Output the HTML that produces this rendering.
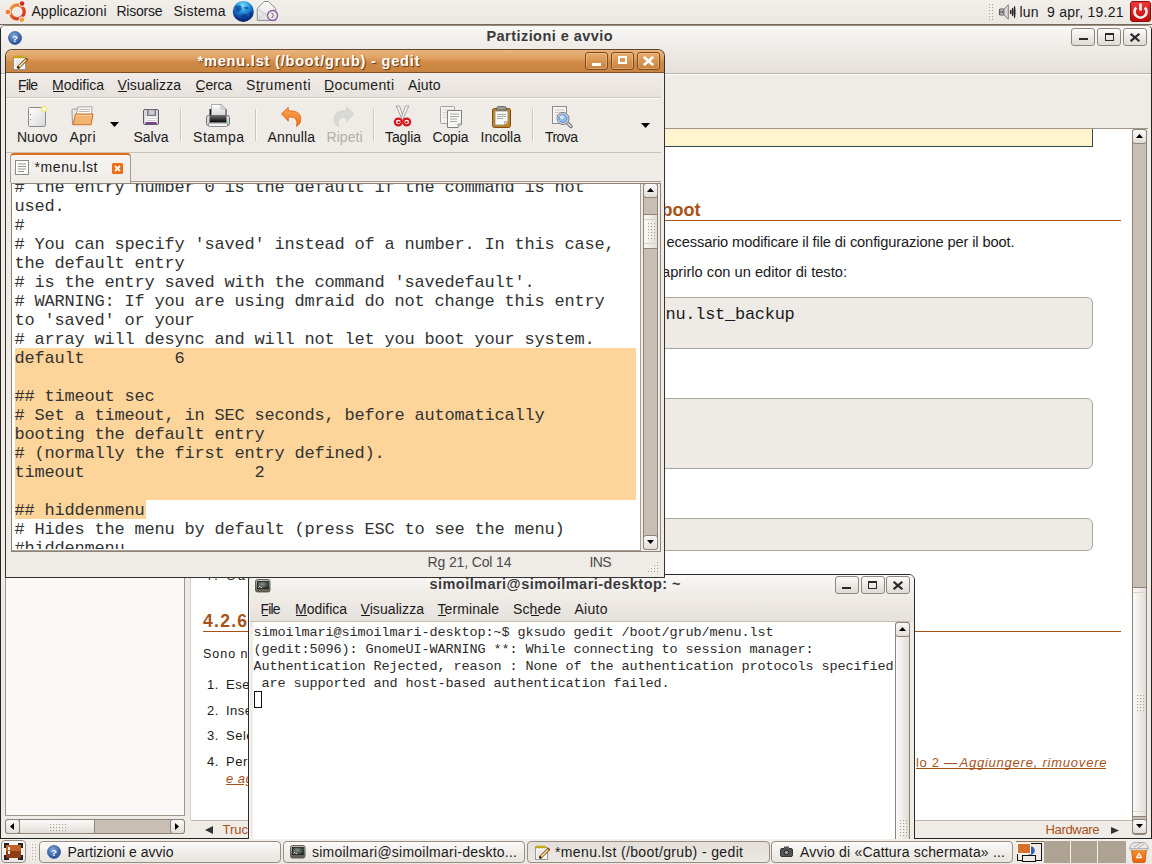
<!DOCTYPE html><html><head><meta charset="utf-8"><style>
html,body{margin:0;padding:0;}
body{width:1152px;height:864px;position:relative;overflow:hidden;background:#efebe7;font-family:'Liberation Sans',sans-serif;}
body div{position:absolute;box-sizing:border-box;}
svg{position:absolute;}
</style></head><body>
<div style="left:0px;top:25px;width:1152px;height:814px;background:#efebe7;border:1px solid #232323;border-top-color:#9a8e81;border-top-left-radius:5px;border-top-right-radius:5px;"></div>
<div style="left:1px;top:26px;width:1150px;height:47px;background:linear-gradient(#f9f8f6,#efebe7 45%,#e5e0db);border-top-left-radius:4px;border-top-right-radius:4px;"></div>
<div style="left:1px;top:73px;width:1150px;height:1px;background:#bdb2a7;"></div>
<div style="left:1px;top:74px;width:1150px;height:1px;background:#ffffff;"></div>
<div style="left:486.50px;top:29.00px;font-family:'Liberation Sans';font-size:14.5px;font-weight:700;font-style:normal;color:#3a3a3a;letter-spacing:0.443px;line-height:1;white-space:pre;">Partizioni e avvio</div>
<svg style="left:8px;top:31px;" width="14" height="14" viewBox="0 0 14 14"><defs><radialGradient id="hg" cx="40%" cy="30%" r="70%"><stop offset="0" stop-color="#7ea6df"/><stop offset="1" stop-color="#234f9b"/></radialGradient></defs><circle cx="7" cy="7" r="6.5" fill="url(#hg)" stroke="#1f3f7a" stroke-width="0.6"/><text x="7" y="10.6" font-family="Liberation Sans" font-weight="700" font-size="9.5" fill="#fff" text-anchor="middle">?</text></svg>
<div style="left:1071px;top:28px;width:24px;height:18px;border:1px solid #8f877e;border-radius:3px;background:linear-gradient(#fdfcfb,#ebe7e3 55%,#e0dbd5);"></div>
<div style="left:1097px;top:28px;width:24px;height:18px;border:1px solid #8f877e;border-radius:3px;background:linear-gradient(#fdfcfb,#ebe7e3 55%,#e0dbd5);"></div>
<div style="left:1123px;top:28px;width:24px;height:18px;border:1px solid #8f877e;border-radius:3px;background:linear-gradient(#fdfcfb,#ebe7e3 55%,#e0dbd5);"></div>
<div style="left:1079px;top:38px;width:9px;height:2px;background:#2a2a2a;"></div>
<div style="left:1105px;top:33px;width:9px;height:8px;border:1px solid #2a2a2a;border-top-width:2px;"></div>
<svg style="left:1130px;top:33px;" width="10" height="9" viewBox="0 0 10 9"><path d="M1.5 1.5 L8.5 7.5 M8.5 1.5 L1.5 7.5" stroke="#2a2a2a" stroke-width="2.2" stroke-linecap="square"/></svg>
<div style="left:5px;top:128px;width:180px;height:688px;background:#faf9f7;border:1px solid #a0958a;"></div>
<div style="left:5px;top:819px;width:180px;height:15px;background:#c9beb3;border:1px solid #8e8378;border-radius:3px;"></div>
<div style="left:5px;top:819px;width:15px;height:15px;border:1px solid #8e8378;border-radius:3px;background:linear-gradient(#fbfaf9,#ece8e4 60%,#e2ddd7);"></div>
<svg style="left:10px;top:823px;" width="4" height="7" viewBox="0 0 4 7"><polygon points="4,0 4,7 0,3.5" fill="#000"/></svg>
<div style="left:19px;top:819px;width:76px;height:15px;border:1px solid #8e8378;background:linear-gradient(#fbfaf9,#ece8e4 60%,#e2ddd7);"></div>
<svg style="left:49px;top:823px;" width="19" height="10" viewBox="0 0 19 10"><rect x="1" y="1" width="1" height="1" fill="#a99e92"/><rect x="0" y="0" width="1" height="1" fill="#ffffff"/><rect x="1" y="4" width="1" height="1" fill="#a99e92"/><rect x="0" y="3" width="1" height="1" fill="#ffffff"/><rect x="1" y="7" width="1" height="1" fill="#a99e92"/><rect x="0" y="6" width="1" height="1" fill="#ffffff"/><rect x="4" y="1" width="1" height="1" fill="#a99e92"/><rect x="3" y="0" width="1" height="1" fill="#ffffff"/><rect x="4" y="4" width="1" height="1" fill="#a99e92"/><rect x="3" y="3" width="1" height="1" fill="#ffffff"/><rect x="4" y="7" width="1" height="1" fill="#a99e92"/><rect x="3" y="6" width="1" height="1" fill="#ffffff"/><rect x="7" y="1" width="1" height="1" fill="#a99e92"/><rect x="6" y="0" width="1" height="1" fill="#ffffff"/><rect x="7" y="4" width="1" height="1" fill="#a99e92"/><rect x="6" y="3" width="1" height="1" fill="#ffffff"/><rect x="7" y="7" width="1" height="1" fill="#a99e92"/><rect x="6" y="6" width="1" height="1" fill="#ffffff"/><rect x="10" y="1" width="1" height="1" fill="#a99e92"/><rect x="9" y="0" width="1" height="1" fill="#ffffff"/><rect x="10" y="4" width="1" height="1" fill="#a99e92"/><rect x="9" y="3" width="1" height="1" fill="#ffffff"/><rect x="10" y="7" width="1" height="1" fill="#a99e92"/><rect x="9" y="6" width="1" height="1" fill="#ffffff"/><rect x="13" y="1" width="1" height="1" fill="#a99e92"/><rect x="12" y="0" width="1" height="1" fill="#ffffff"/><rect x="13" y="4" width="1" height="1" fill="#a99e92"/><rect x="12" y="3" width="1" height="1" fill="#ffffff"/><rect x="13" y="7" width="1" height="1" fill="#a99e92"/><rect x="12" y="6" width="1" height="1" fill="#ffffff"/><rect x="16" y="1" width="1" height="1" fill="#a99e92"/><rect x="15" y="0" width="1" height="1" fill="#ffffff"/><rect x="16" y="4" width="1" height="1" fill="#a99e92"/><rect x="15" y="3" width="1" height="1" fill="#ffffff"/><rect x="16" y="7" width="1" height="1" fill="#a99e92"/><rect x="15" y="6" width="1" height="1" fill="#ffffff"/></svg>
<div style="left:170px;top:819px;width:15px;height:15px;border:1px solid #8e8378;border-radius:3px;background:linear-gradient(#fbfaf9,#ece8e4 60%,#e2ddd7);"></div>
<svg style="left:175px;top:823px;" width="4" height="7" viewBox="0 0 4 7"><polygon points="0,0 0,7 4,3.5" fill="#000"/></svg>
<div style="left:185px;top:128px;width:5px;height:692px;background:#efebe7;"></div>
<div style="left:190px;top:128px;width:942px;height:692px;background:#ffffff;border-left:1px solid #d5cfc8;border-top:1px solid #a0958a;"></div>
<div style="left:190px;top:128px;width:958px;height:1px;background:#a0958a;"></div>
<div style="left:191px;top:129px;width:902px;height:18px;background:#fff4cd;border-right:1px solid #2f4e4c;border-bottom:1px solid #2f4e4c;"></div>
<div style="left:661.52px;top:201.00px;font-family:'Liberation Sans';font-size:18px;font-weight:700;font-style:normal;color:#a8521a;letter-spacing:0.000px;line-height:1;white-space:pre;">boot</div>
<div style="left:203px;top:220px;width:918px;height:1px;background:#a8521a;"></div>
<div style="left:666.50px;top:235.00px;font-family:'Liberation Sans';font-size:14.67px;font-weight:400;font-style:normal;color:#1a1a1a;letter-spacing:-0.124px;line-height:1;white-space:pre;">ecessario modificare il file di configurazione per il boot.</div>
<div style="left:662.06px;top:265.00px;font-family:'Liberation Sans';font-size:14.67px;font-weight:400;font-style:normal;color:#1a1a1a;letter-spacing:0.000px;line-height:1;white-space:pre;">aprirlo con un editor di testo:</div>
<div style="left:203px;top:297px;width:890px;height:52px;background:#eeebe6;border:1px solid #aca69f;border-radius:6px;"></div>
<div style="left:665.50px;top:306.00px;font-family:'Liberation Mono';font-size:17px;font-weight:400;font-style:normal;color:#1a1a1a;letter-spacing:-0.279px;line-height:1;white-space:pre;">nu.lst_backup</div>
<div style="left:203px;top:398px;width:890px;height:71px;background:#eeebe6;border:1px solid #aca69f;border-radius:6px;"></div>
<div style="left:203px;top:518px;width:890px;height:33px;background:#eeebe6;border:1px solid #aca69f;border-radius:6px;"></div>
<div style="left:204.50px;top:570.00px;font-family:'Liberation Sans';font-size:12.5px;font-weight:400;font-style:normal;color:#1a1a1a;letter-spacing:2.806px;line-height:1;white-space:pre;">4. Sal</div>
<div style="left:203.00px;top:613.00px;font-family:'Liberation Sans';font-size:17.5px;font-weight:700;font-style:normal;color:#a8521a;letter-spacing:1.266px;line-height:1;white-space:pre;">4.2.6</div>
<div style="left:203px;top:631px;width:918px;height:1px;background:#a8521a;"></div>
<div style="left:203.00px;top:648.00px;font-family:'Liberation Sans';font-size:12.5px;font-weight:400;font-style:normal;color:#1a1a1a;letter-spacing:0.975px;line-height:1;white-space:pre;">Sono n</div>
<div style="left:207.00px;top:678.00px;font-family:'Liberation Sans';font-size:13px;font-weight:400;font-style:normal;color:#1a1a1a;letter-spacing:0.000px;line-height:1;white-space:pre;letter-spacing:0.6px;">1.</div>
<div style="left:226.00px;top:678.00px;font-family:'Liberation Sans';font-size:13px;font-weight:400;font-style:normal;color:#1a1a1a;letter-spacing:0.000px;line-height:1;white-space:pre;letter-spacing:0.5px;">Eseguire</div>
<div style="left:207.00px;top:703.70px;font-family:'Liberation Sans';font-size:13px;font-weight:400;font-style:normal;color:#1a1a1a;letter-spacing:0.000px;line-height:1;white-space:pre;letter-spacing:0.6px;">2.</div>
<div style="left:226.00px;top:703.70px;font-family:'Liberation Sans';font-size:13px;font-weight:400;font-style:normal;color:#1a1a1a;letter-spacing:0.000px;line-height:1;white-space:pre;letter-spacing:0.5px;">Inserire</div>
<div style="left:207.00px;top:729.40px;font-family:'Liberation Sans';font-size:13px;font-weight:400;font-style:normal;color:#1a1a1a;letter-spacing:0.000px;line-height:1;white-space:pre;letter-spacing:0.6px;">3.</div>
<div style="left:226.00px;top:729.40px;font-family:'Liberation Sans';font-size:13px;font-weight:400;font-style:normal;color:#1a1a1a;letter-spacing:0.000px;line-height:1;white-space:pre;letter-spacing:0.5px;">Selezionare</div>
<div style="left:207.00px;top:755.10px;font-family:'Liberation Sans';font-size:13px;font-weight:400;font-style:normal;color:#1a1a1a;letter-spacing:0.000px;line-height:1;white-space:pre;letter-spacing:0.6px;">4.</div>
<div style="left:226.00px;top:755.10px;font-family:'Liberation Sans';font-size:13px;font-weight:400;font-style:normal;color:#1a1a1a;letter-spacing:0.000px;line-height:1;white-space:pre;letter-spacing:0.5px;">Per</div>
<div style="left:226.00px;top:772.00px;font-family:'Liberation Sans';font-size:13px;font-weight:400;font-style:italic;color:#a8521a;letter-spacing:0.000px;line-height:1;white-space:pre;text-decoration:underline;letter-spacing:0.5px;">e aggiungere</div>
<div style="left:916.00px;top:755.50px;font-family:'Liberation Sans';font-size:13px;font-weight:400;font-style:normal;color:#a8521a;letter-spacing:0.684px;line-height:1;white-space:pre;">lo 2 —</div>
<div style="left:959.50px;top:755.50px;font-family:'Liberation Sans';font-size:13px;font-weight:400;font-style:italic;color:#a8521a;letter-spacing:0.773px;line-height:1;white-space:pre;">Aggiungere, rimuovere</div>
<div style="left:916px;top:768px;width:190px;height:1px;background:#a8521a;"></div>
<div style="left:191px;top:820px;width:941px;height:18px;background:#efebe7;border-top:1px solid #bdb4aa;"></div>
<svg style="left:205px;top:826px;" width="8" height="8" viewBox="0 0 8 8"><polygon points="8,0 8,8 0,4" fill="#333"/></svg>
<div style="left:222.50px;top:823.00px;font-family:'Liberation Sans';font-size:13px;font-weight:400;font-style:normal;color:#a8521a;letter-spacing:0.000px;line-height:1;white-space:pre;">Trucchi</div>
<div style="left:1045.50px;top:823.00px;font-family:'Liberation Sans';font-size:13px;font-weight:400;font-style:normal;color:#a8521a;letter-spacing:-0.337px;line-height:1;white-space:pre;">Hardware</div>
<svg style="left:1111px;top:827px;" width="8" height="7" viewBox="0 0 8 7"><polygon points="0,0 0,7 8,3.5" fill="#333"/></svg>
<div style="left:1132px;top:129px;width:15px;height:706px;background:#c9beb3;border:1px solid #8e8378;border-radius:3px;"></div>
<div style="left:1132px;top:129px;width:15px;height:15px;border:1px solid #8e8378;border-radius:3px;background:linear-gradient(#fbfaf9,#ece8e4 60%,#e2ddd7);"></div>
<svg style="left:1136px;top:134px;" width="7" height="4" viewBox="0 0 7 4"><polygon points="0,4 7,4 3.5,0" fill="#000"/></svg>
<div style="left:1132px;top:587px;width:15px;height:230px;border:1px solid #8e8378;background:linear-gradient(90deg,#fbfaf9,#ece8e4 60%,#e2ddd7);"></div>
<svg style="left:1136px;top:694px;" width="10" height="19" viewBox="0 0 10 19"><rect x="1" y="1" width="1" height="1" fill="#a99e92"/><rect x="0" y="0" width="1" height="1" fill="#ffffff"/><rect x="1" y="4" width="1" height="1" fill="#a99e92"/><rect x="0" y="3" width="1" height="1" fill="#ffffff"/><rect x="1" y="7" width="1" height="1" fill="#a99e92"/><rect x="0" y="6" width="1" height="1" fill="#ffffff"/><rect x="1" y="10" width="1" height="1" fill="#a99e92"/><rect x="0" y="9" width="1" height="1" fill="#ffffff"/><rect x="1" y="13" width="1" height="1" fill="#a99e92"/><rect x="0" y="12" width="1" height="1" fill="#ffffff"/><rect x="1" y="16" width="1" height="1" fill="#a99e92"/><rect x="0" y="15" width="1" height="1" fill="#ffffff"/><rect x="4" y="1" width="1" height="1" fill="#a99e92"/><rect x="3" y="0" width="1" height="1" fill="#ffffff"/><rect x="4" y="4" width="1" height="1" fill="#a99e92"/><rect x="3" y="3" width="1" height="1" fill="#ffffff"/><rect x="4" y="7" width="1" height="1" fill="#a99e92"/><rect x="3" y="6" width="1" height="1" fill="#ffffff"/><rect x="4" y="10" width="1" height="1" fill="#a99e92"/><rect x="3" y="9" width="1" height="1" fill="#ffffff"/><rect x="4" y="13" width="1" height="1" fill="#a99e92"/><rect x="3" y="12" width="1" height="1" fill="#ffffff"/><rect x="4" y="16" width="1" height="1" fill="#a99e92"/><rect x="3" y="15" width="1" height="1" fill="#ffffff"/><rect x="7" y="1" width="1" height="1" fill="#a99e92"/><rect x="6" y="0" width="1" height="1" fill="#ffffff"/><rect x="7" y="4" width="1" height="1" fill="#a99e92"/><rect x="6" y="3" width="1" height="1" fill="#ffffff"/><rect x="7" y="7" width="1" height="1" fill="#a99e92"/><rect x="6" y="6" width="1" height="1" fill="#ffffff"/><rect x="7" y="10" width="1" height="1" fill="#a99e92"/><rect x="6" y="9" width="1" height="1" fill="#ffffff"/><rect x="7" y="13" width="1" height="1" fill="#a99e92"/><rect x="6" y="12" width="1" height="1" fill="#ffffff"/><rect x="7" y="16" width="1" height="1" fill="#a99e92"/><rect x="6" y="15" width="1" height="1" fill="#ffffff"/></svg>
<div style="left:1133px;top:592px;width:13px;height:1px;background:#d9d3cc;"></div>
<div style="left:1133px;top:811px;width:13px;height:1px;background:#d9d3cc;"></div>
<div style="left:1132px;top:819px;width:15px;height:15px;border:1px solid #8e8378;border-radius:3px;background:linear-gradient(#fbfaf9,#ece8e4 60%,#e2ddd7);"></div>
<svg style="left:1136px;top:824px;" width="7" height="4" viewBox="0 0 7 4"><polygon points="0,0 7,0 3.5,4" fill="#000"/></svg>
<div style="left:248px;top:574px;width:667px;height:300px;background:#efebe7;border:1px solid #2a2a2a;border-top-left-radius:6px;border-top-right-radius:6px;"></div>
<div style="left:250px;top:575px;width:664px;height:47px;background:linear-gradient(#f9f8f6,#efebe7 45%,#e6e1dc);border-top-left-radius:5px;border-top-right-radius:5px;"></div>
<div style="left:250px;top:597px;width:660px;height:25px;background:linear-gradient(#efebe7,#e6e1dc);border-bottom:1px solid #c6bdb3;"></div>
<svg style="left:255px;top:579px;" width="16" height="14" viewBox="0 0 16 14"><defs><linearGradient id="tb0" x1="0" y1="0" x2="0" y2="1"><stop offset="0" stop-color="#c9c5bb"/><stop offset="1" stop-color="#5a5648"/></linearGradient><radialGradient id="ts0" cx="45%" cy="40%" r="70%"><stop offset="0" stop-color="#8a948e"/><stop offset="1" stop-color="#1e2420"/></radialGradient></defs><rect x="0.5" y="0.5" width="14.5" height="12.5" rx="2" fill="url(#tb0)" stroke="#55524a" stroke-width="0.9"/><rect x="2.3" y="2.3" width="11" height="7.5" fill="url(#ts0)" stroke="#111" stroke-width="0.6"/><path d="M3.5 8.5 L5 7 M5.5 8.5h1.5" stroke="#e8e8e8" stroke-width="1"/></svg>
<div style="left:429.50px;top:576.50px;font-family:'Liberation Sans';font-size:14.5px;font-weight:700;font-style:normal;color:#3a3a3a;letter-spacing:0.453px;line-height:1;white-space:pre;">simoilmari@simoilmari-desktop: ~</div>
<div style="left:835px;top:576px;width:24px;height:18px;border:1px solid #8f877e;border-radius:3px;background:linear-gradient(#fdfcfb,#ebe7e3 55%,#e0dbd5);"></div>
<div style="left:861px;top:576px;width:24px;height:18px;border:1px solid #8f877e;border-radius:3px;background:linear-gradient(#fdfcfb,#ebe7e3 55%,#e0dbd5);"></div>
<div style="left:886px;top:576px;width:24px;height:18px;border:1px solid #8f877e;border-radius:3px;background:linear-gradient(#fdfcfb,#ebe7e3 55%,#e0dbd5);"></div>
<div style="left:842px;top:587px;width:9px;height:2px;background:#2a2a2a;"></div>
<div style="left:868px;top:581px;width:9px;height:8px;border:1px solid #2a2a2a;border-top-width:2px;"></div>
<svg style="left:893px;top:581px;" width="10" height="9" viewBox="0 0 10 9"><path d="M1.5 1.5 L8.5 7.5 M8.5 1.5 L1.5 7.5" stroke="#2a2a2a" stroke-width="2.2" stroke-linecap="square"/></svg>
<div style="left:260.50px;top:602.00px;font-family:'Liberation Sans';font-size:14px;font-weight:400;font-style:normal;color:#1a1a1a;letter-spacing:-0.854px;line-height:1;white-space:pre;">File</div>
<div style="left:295.00px;top:602.00px;font-family:'Liberation Sans';font-size:14px;font-weight:400;font-style:normal;color:#1a1a1a;letter-spacing:-0.020px;line-height:1;white-space:pre;">Modifica</div>
<div style="left:360.50px;top:602.00px;font-family:'Liberation Sans';font-size:14px;font-weight:400;font-style:normal;color:#1a1a1a;letter-spacing:0.080px;line-height:1;white-space:pre;">Visualizza</div>
<div style="left:437.50px;top:602.00px;font-family:'Liberation Sans';font-size:14px;font-weight:400;font-style:normal;color:#1a1a1a;letter-spacing:0.100px;line-height:1;white-space:pre;">Terminale</div>
<div style="left:513.00px;top:602.00px;font-family:'Liberation Sans';font-size:14px;font-weight:400;font-style:normal;color:#1a1a1a;letter-spacing:0.103px;line-height:1;white-space:pre;">Schede</div>
<div style="left:574.50px;top:602.00px;font-family:'Liberation Sans';font-size:14px;font-weight:400;font-style:normal;color:#1a1a1a;letter-spacing:0.270px;line-height:1;white-space:pre;">Aiuto</div>
<div style="left:262px;top:615px;width:6px;height:1px;background:#1a1a1a;"></div>
<div style="left:296px;top:615px;width:11px;height:1px;background:#1a1a1a;"></div>
<div style="left:361px;top:615px;width:9px;height:1px;background:#1a1a1a;"></div>
<div style="left:438px;top:615px;width:8px;height:1px;background:#1a1a1a;"></div>
<div style="left:531px;top:615px;width:8px;height:1px;background:#1a1a1a;"></div>
<div style="left:249px;top:597px;width:1px;height:250px;background:#fbfaf8;"></div>
<div style="left:253px;top:622px;width:642px;height:230px;background:#ffffff;"></div>
<div style="left:253.50px;top:625.50px;font-family:'Liberation Mono';font-size:13.5px;font-weight:400;font-style:normal;color:#2a2a2a;letter-spacing:-0.101px;line-height:1;white-space:pre;">simoilmari@simoilmari-desktop:~$ gksudo gedit /boot/grub/menu.lst</div>
<div style="left:253.50px;top:642.50px;font-family:'Liberation Mono';font-size:13.5px;font-weight:400;font-style:normal;color:#2a2a2a;letter-spacing:-0.101px;line-height:1;white-space:pre;">(gedit:5096): GnomeUI-WARNING **: While connecting to session manager:</div>
<div style="left:253.50px;top:659.50px;font-family:'Liberation Mono';font-size:13.5px;font-weight:400;font-style:normal;color:#2a2a2a;letter-spacing:-0.101px;line-height:1;white-space:pre;">Authentication Rejected, reason : None of the authentication protocols specified</div>
<div style="left:253.50px;top:676.50px;font-family:'Liberation Mono';font-size:13.5px;font-weight:400;font-style:normal;color:#2a2a2a;letter-spacing:-0.102px;line-height:1;white-space:pre;"> are supported and host-based authentication failed.</div>
<div style="left:254px;top:691px;width:8px;height:17px;border:1px solid #111;"></div>
<div style="left:895px;top:622px;width:15px;height:230px;border:1px solid #8e8378;border-radius:3px;background:linear-gradient(90deg,#fbfaf9,#ece8e4 60%,#e2ddd7);"></div>
<div style="left:895px;top:622px;width:15px;height:15px;border:1px solid #8e8378;border-radius:3px;background:linear-gradient(#fbfaf9,#ece8e4 60%,#e2ddd7);"></div>
<svg style="left:899px;top:627px;" width="7" height="4" viewBox="0 0 7 4"><polygon points="0,4 7,4 3.5,0" fill="#000"/></svg>
<svg style="left:899px;top:819px;" width="10" height="19" viewBox="0 0 10 19"><rect x="1" y="1" width="1" height="1" fill="#a99e92"/><rect x="0" y="0" width="1" height="1" fill="#ffffff"/><rect x="1" y="4" width="1" height="1" fill="#a99e92"/><rect x="0" y="3" width="1" height="1" fill="#ffffff"/><rect x="1" y="7" width="1" height="1" fill="#a99e92"/><rect x="0" y="6" width="1" height="1" fill="#ffffff"/><rect x="1" y="10" width="1" height="1" fill="#a99e92"/><rect x="0" y="9" width="1" height="1" fill="#ffffff"/><rect x="1" y="13" width="1" height="1" fill="#a99e92"/><rect x="0" y="12" width="1" height="1" fill="#ffffff"/><rect x="1" y="16" width="1" height="1" fill="#a99e92"/><rect x="0" y="15" width="1" height="1" fill="#ffffff"/><rect x="4" y="1" width="1" height="1" fill="#a99e92"/><rect x="3" y="0" width="1" height="1" fill="#ffffff"/><rect x="4" y="4" width="1" height="1" fill="#a99e92"/><rect x="3" y="3" width="1" height="1" fill="#ffffff"/><rect x="4" y="7" width="1" height="1" fill="#a99e92"/><rect x="3" y="6" width="1" height="1" fill="#ffffff"/><rect x="4" y="10" width="1" height="1" fill="#a99e92"/><rect x="3" y="9" width="1" height="1" fill="#ffffff"/><rect x="4" y="13" width="1" height="1" fill="#a99e92"/><rect x="3" y="12" width="1" height="1" fill="#ffffff"/><rect x="4" y="16" width="1" height="1" fill="#a99e92"/><rect x="3" y="15" width="1" height="1" fill="#ffffff"/><rect x="7" y="1" width="1" height="1" fill="#a99e92"/><rect x="6" y="0" width="1" height="1" fill="#ffffff"/><rect x="7" y="4" width="1" height="1" fill="#a99e92"/><rect x="6" y="3" width="1" height="1" fill="#ffffff"/><rect x="7" y="7" width="1" height="1" fill="#a99e92"/><rect x="6" y="6" width="1" height="1" fill="#ffffff"/><rect x="7" y="10" width="1" height="1" fill="#a99e92"/><rect x="6" y="9" width="1" height="1" fill="#ffffff"/><rect x="7" y="13" width="1" height="1" fill="#a99e92"/><rect x="6" y="12" width="1" height="1" fill="#ffffff"/><rect x="7" y="16" width="1" height="1" fill="#a99e92"/><rect x="6" y="15" width="1" height="1" fill="#ffffff"/></svg>
<div style="left:5px;top:49px;width:660px;height:529px;background:#efebe7;border:1px solid #37322d;border-top-color:#5e4732;border-top-left-radius:7px;border-top-right-radius:7px;"></div>
<div style="left:6px;top:50px;width:658px;height:23px;background:linear-gradient(#eab37c,#e1a263 35%,#d08a48 55%,#c98443);border-bottom:1px solid #7c4f25;border-top-left-radius:6px;border-top-right-radius:6px;"></div>
<svg style="left:13px;top:55px;" width="15" height="15" viewBox="0 0 15 15"><rect x="0.5" y="2.5" width="12" height="12" fill="#f6f6f4" stroke="#8d939a" stroke-width="0.9"/><path d="M2.5 6h7M2.5 8h7M2.5 10h6M2.5 12h5" stroke="#cfcfcf" stroke-width="0.7"/><circle cx="1.6" cy="2" r="1.05" fill="#e6c400" stroke="#a88a00" stroke-width="0.5"/><circle cx="3.6" cy="2" r="1.05" fill="#e6c400" stroke="#a88a00" stroke-width="0.5"/><circle cx="5.6" cy="2" r="1.05" fill="#e6c400" stroke="#a88a00" stroke-width="0.5"/><circle cx="7.6" cy="2" r="1.05" fill="#e6c400" stroke="#a88a00" stroke-width="0.5"/><circle cx="9.6" cy="2" r="1.05" fill="#e6c400" stroke="#a88a00" stroke-width="0.5"/><path d="M5.6 12.2 L13.3 4.5" stroke="#8a5a12" stroke-width="3.3" stroke-linecap="round"/><path d="M6.2 11.6 L13 4.8" stroke="#f2dca8" stroke-width="1.6"/><circle cx="5.3" cy="12.6" r="1" fill="#111"/></svg>
<div style="left:197.50px;top:54.00px;font-family:'Liberation Sans';font-size:14.5px;font-weight:700;font-style:normal;color:#ffffff;letter-spacing:0.822px;line-height:1;white-space:pre;text-shadow:1px 1px 1px rgba(70,40,10,0.85);">*menu.lst (/boot/grub) - gedit</div>
<div style="left:585px;top:52px;width:23px;height:18px;border:1px solid #7a4b1f;border-radius:3px;background:linear-gradient(#e9ad70,#d99552 50%,#c98241);box-shadow:inset 0 0 0 1px rgba(255,220,170,0.35);"></div>
<div style="left:611px;top:52px;width:23px;height:18px;border:1px solid #7a4b1f;border-radius:3px;background:linear-gradient(#e9ad70,#d99552 50%,#c98241);box-shadow:inset 0 0 0 1px rgba(255,220,170,0.35);"></div>
<div style="left:637px;top:52px;width:23px;height:18px;border:1px solid #7a4b1f;border-radius:3px;background:linear-gradient(#e9ad70,#d99552 50%,#c98241);box-shadow:inset 0 0 0 1px rgba(255,220,170,0.35);"></div>
<div style="left:592px;top:63px;width:9px;height:3px;background:#fff;"></div>
<div style="left:618px;top:56px;width:9px;height:8px;border:2px solid #fff;"></div>
<svg style="left:643px;top:56px;" width="11" height="10" viewBox="0 0 11 10"><path d="M1.8 1.8 L9.2 8.2 M9.2 1.8 L1.8 8.2" stroke="#fff" stroke-width="2.8" stroke-linecap="square"/></svg>
<div style="left:6px;top:73px;width:655px;height:25px;background:linear-gradient(#f0ece8,#e7e2dd);border-bottom:1px solid #cfc6bc;"></div>
<div style="left:6px;top:98px;width:655px;height:1px;background:#fafaf8;"></div>
<div style="left:18.00px;top:77.50px;font-family:'Liberation Sans';font-size:14px;font-weight:400;font-style:normal;color:#1a1a1a;letter-spacing:-0.854px;line-height:1;white-space:pre;">File</div>
<div style="left:52.00px;top:77.50px;font-family:'Liberation Sans';font-size:14px;font-weight:400;font-style:normal;color:#1a1a1a;letter-spacing:-0.020px;line-height:1;white-space:pre;">Modifica</div>
<div style="left:117.50px;top:77.50px;font-family:'Liberation Sans';font-size:14px;font-weight:400;font-style:normal;color:#1a1a1a;letter-spacing:0.080px;line-height:1;white-space:pre;">Visualizza</div>
<div style="left:195.50px;top:77.50px;font-family:'Liberation Sans';font-size:14px;font-weight:400;font-style:normal;color:#1a1a1a;letter-spacing:-0.215px;line-height:1;white-space:pre;">Cerca</div>
<div style="left:246.00px;top:77.50px;font-family:'Liberation Sans';font-size:14px;font-weight:400;font-style:normal;color:#1a1a1a;letter-spacing:0.572px;line-height:1;white-space:pre;">Strumenti</div>
<div style="left:324.00px;top:77.50px;font-family:'Liberation Sans';font-size:14px;font-weight:400;font-style:normal;color:#1a1a1a;letter-spacing:0.385px;line-height:1;white-space:pre;">Documenti</div>
<div style="left:408.00px;top:77.50px;font-family:'Liberation Sans';font-size:14px;font-weight:400;font-style:normal;color:#1a1a1a;letter-spacing:0.145px;line-height:1;white-space:pre;">Aiuto</div>
<div style="left:19px;top:91px;width:6px;height:1px;background:#1a1a1a;"></div>
<div style="left:53px;top:91px;width:11px;height:1px;background:#1a1a1a;"></div>
<div style="left:118px;top:91px;width:9px;height:1px;background:#1a1a1a;"></div>
<div style="left:196px;top:91px;width:8px;height:1px;background:#1a1a1a;"></div>
<div style="left:256px;top:91px;width:6px;height:1px;background:#1a1a1a;"></div>
<div style="left:325px;top:91px;width:9px;height:1px;background:#1a1a1a;"></div>
<div style="left:417px;top:91px;width:4px;height:1px;background:#1a1a1a;"></div>
<div style="left:17.00px;top:130.00px;font-family:'Liberation Sans';font-size:14px;font-weight:400;font-style:normal;color:#1a1a1a;letter-spacing:0.008px;line-height:1;white-space:pre;">Nuovo</div>
<div style="left:69.50px;top:130.00px;font-family:'Liberation Sans';font-size:14px;font-weight:400;font-style:normal;color:#1a1a1a;letter-spacing:0.365px;line-height:1;white-space:pre;">Apri</div>
<div style="left:133.50px;top:130.00px;font-family:'Liberation Sans';font-size:14px;font-weight:400;font-style:normal;color:#1a1a1a;letter-spacing:-0.008px;line-height:1;white-space:pre;">Salva</div>
<div style="left:193.00px;top:130.00px;font-family:'Liberation Sans';font-size:14px;font-weight:400;font-style:normal;color:#1a1a1a;letter-spacing:0.550px;line-height:1;white-space:pre;">Stampa</div>
<div style="left:267.50px;top:130.00px;font-family:'Liberation Sans';font-size:14px;font-weight:400;font-style:normal;color:#1a1a1a;letter-spacing:0.133px;line-height:1;white-space:pre;">Annulla</div>
<div style="left:326.50px;top:130.00px;font-family:'Liberation Sans';font-size:14px;font-weight:400;font-style:normal;color:#b4aea8;letter-spacing:0.041px;line-height:1;white-space:pre;">Ripeti</div>
<div style="left:385.00px;top:130.00px;font-family:'Liberation Sans';font-size:14px;font-weight:400;font-style:normal;color:#1a1a1a;letter-spacing:-0.119px;line-height:1;white-space:pre;">Taglia</div>
<div style="left:432.50px;top:130.00px;font-family:'Liberation Sans';font-size:14px;font-weight:400;font-style:normal;color:#1a1a1a;letter-spacing:-0.148px;line-height:1;white-space:pre;">Copia</div>
<div style="left:480.50px;top:130.00px;font-family:'Liberation Sans';font-size:14px;font-weight:400;font-style:normal;color:#1a1a1a;letter-spacing:0.005px;line-height:1;white-space:pre;">Incolla</div>
<div style="left:545.00px;top:130.00px;font-family:'Liberation Sans';font-size:14px;font-weight:400;font-style:normal;color:#1a1a1a;letter-spacing:-0.570px;line-height:1;white-space:pre;">Trova</div>
<div style="left:180px;top:109px;width:1px;height:32px;background:#cdc5bc;"></div>
<div style="left:181px;top:109px;width:1px;height:32px;background:#fbfaf9;"></div>
<div style="left:255px;top:109px;width:1px;height:32px;background:#cdc5bc;"></div>
<div style="left:256px;top:109px;width:1px;height:32px;background:#fbfaf9;"></div>
<div style="left:373px;top:109px;width:1px;height:32px;background:#cdc5bc;"></div>
<div style="left:374px;top:109px;width:1px;height:32px;background:#fbfaf9;"></div>
<div style="left:532px;top:109px;width:1px;height:32px;background:#cdc5bc;"></div>
<div style="left:533px;top:109px;width:1px;height:32px;background:#fbfaf9;"></div>
<svg style="left:110px;top:122px;" width="9" height="5" viewBox="0 0 9 5"><polygon points="0,0 9,0 4.5,5" fill="#000"/></svg>
<svg style="left:641px;top:123px;" width="9" height="5" viewBox="0 0 9 5"><polygon points="0,0 9,0 4.5,5" fill="#000"/></svg>
<div style="left:6px;top:152px;width:655px;height:1px;background:#cbc1b6;"></div>
<svg style="left:28px;top:106px;" width="19" height="21" viewBox="0 0 19 21"><defs><linearGradient id="ng" x1="0" y1="0" x2="1" y2="1"><stop offset="0" stop-color="#fff"/><stop offset="1" stop-color="#d8d8d8"/></linearGradient></defs><rect x="0.5" y="1.5" width="17" height="19" rx="1" fill="url(#ng)" stroke="#8a8a8a"/><circle cx="16" cy="3" r="2.4" fill="#ffffff" stroke="#eee760" stroke-width="1.3"/><rect x="2" y="8" width="1" height="1" fill="#888"/><rect x="2" y="13" width="1" height="1" fill="#888"/></svg>
<svg style="left:70px;top:106px;" width="24" height="20" viewBox="0 0 24 20"><path d="M2.5 18.5 L2 4.5 Q2 3 3.5 3 L7 3 L8 1.5 L9 18.5Z" fill="#e9e9e6" stroke="#9a9a96"/><path d="M8 1 L22 0.8 L21.5 9 L6 9Z" fill="#fafaf8" stroke="#a6a6a2"/><path d="M9 3.5h11M8.5 5.5h11" stroke="#b9b9b5"/><path d="M5.5 8 L23 8 L21.2 18.7 L3 18.7Z" fill="#f3b470" stroke="#d2701e"/><path d="M6 9.5 L22 9.5" stroke="#f9d3a3"/></svg>
<svg style="left:143px;top:109px;" width="16" height="16" viewBox="0 0 16 16"><rect x="0.5" y="0.5" width="15" height="15" rx="1.5" fill="#d9d6de" stroke="#5f5b66"/><rect x="4.5" y="0.5" width="8" height="6" fill="#a19fa8" stroke="#6d6a74" stroke-width="0.8"/><rect x="6" y="1.5" width="5" height="4" fill="#cfcdd3"/><rect x="2.5" y="7.5" width="11" height="6" fill="#fbfbfb"/><path d="M3.5 9.5h9M3.5 11.5h9" stroke="#d0d0d0"/><rect x="2.5" y="13" width="11" height="2" fill="#7d3f8e"/></svg>
<svg style="left:206px;top:104px;" width="24" height="24" viewBox="0 0 24 24"><defs><linearGradient id="pk" x1="0" y1="0" x2="0" y2="1"><stop offset="0" stop-color="#6a6a6a"/><stop offset="1" stop-color="#050505"/></linearGradient><linearGradient id="pp" x1="0" y1="0" x2="0" y2="1"><stop offset="0" stop-color="#ffffff"/><stop offset="1" stop-color="#cfcfcf"/></linearGradient></defs><rect x="3.5" y="5" width="17" height="12" fill="#151515"/><path d="M5.5 0.5 L15 0.5 L19.5 5 L19.5 13 L5.5 13Z" fill="url(#pp)" stroke="#9a9a9a" stroke-width="0.8"/><path d="M15 0.5 L15 5 L19.5 5Z" fill="#e4e4e4" stroke="#9a9a9a" stroke-width="0.6"/><rect x="0.5" y="11.5" width="23" height="10" rx="2" fill="#d9d7e2" stroke="#6f6f78"/><rect x="3.5" y="11.5" width="17" height="7" fill="url(#pk)"/><rect x="2.5" y="19" width="19" height="3.5" rx="1" fill="#f4f4f6" stroke="#777" stroke-width="0.8"/><rect x="20" y="17" width="1.6" height="1.6" fill="#3fcf3f"/></svg>
<svg style="left:281px;top:107px;" width="21" height="20" viewBox="0 0 21 20"><defs><linearGradient id="ug" x1="0" y1="0" x2="0" y2="1"><stop offset="0" stop-color="#f9a45a"/><stop offset="1" stop-color="#ef7410"/></linearGradient></defs><path d="M0.5 6.8 L7.3 0.3 L7.3 3.9 L11 3.9 Q19.8 4.5 19.8 12.5 Q19.8 17 15.4 19.6 Q17 14 14 11.5 Q12.5 10.1 10 10.1 L7.3 10.1 L7.3 14.2 Z" fill="url(#ug)" stroke="#e0600a" stroke-width="0.8" stroke-linejoin="round"/></svg>
<svg style="left:333px;top:107px;" width="21" height="20" viewBox="0 0 21 20"><path transform="translate(21,0) scale(-1,1)" d="M0.5 6.8 L7.3 0.3 L7.3 3.9 L11 3.9 Q19.8 4.5 19.8 12.5 Q19.8 17 15.4 19.6 Q17 14 14 11.5 Q12.5 10.1 10 10.1 L7.3 10.1 L7.3 14.2 Z" fill="#d9d9d5" stroke="#cdcdc9" stroke-width="0.8" stroke-linejoin="round"/></svg>
<svg style="left:393px;top:105px;" width="19" height="23" viewBox="0 0 19 23"><path d="M3.2 1 L6.5 1 L11 13.5 L9.2 14.5Z" fill="#f4f4f4" stroke="#9c9c9c" stroke-width="0.9"/><path d="M12.5 1 L15.8 1 L9.8 14.5 L8 13.5Z" fill="#f4f4f4" stroke="#9c9c9c" stroke-width="0.9"/><circle cx="5.3" cy="17" r="3.4" fill="#fff" stroke="#d8141a" stroke-width="2.2"/><circle cx="13.7" cy="17" r="3.4" fill="#fff" stroke="#d8141a" stroke-width="2.2"/><circle cx="5.6" cy="17.3" r="1.2" fill="#d8141a"/><circle cx="13.4" cy="17.3" r="1.2" fill="#d8141a"/></svg>
<svg style="left:440px;top:106px;" width="23" height="22" viewBox="0 0 23 22"><rect x="0.5" y="0.5" width="14" height="17" rx="1" fill="#f2f2f0" stroke="#a2a2a0"/><path d="M3 4h9M3 6.5h9M3 9h9M3 11.5h9" stroke="#d2d2d0"/><path d="M7.5 4.5 H21.5 V18 L18 21.5 H7.5Z" fill="#f6f6f5" stroke="#7f7f7d"/><path d="M18 21.5 V18 H21.5" fill="#d8d8d6" stroke="#7f7f7d" stroke-width="0.8"/><path d="M10 8h9M10 10.5h9M10 13h7M10 15.5h7" stroke="#a8a8a6"/></svg>
<svg style="left:492px;top:106px;" width="19" height="22" viewBox="0 0 19 22"><rect x="0.5" y="2.5" width="18" height="19" rx="2" fill="#c4821e" stroke="#7d4f12"/><path d="M3 5 H16 V15.5 L12.5 19 H3Z" fill="#f7f7f5" stroke="#8a8a88" stroke-width="0.8"/><path d="M12.5 19 V15.5 H16" fill="#dcdcda" stroke="#8a8a88" stroke-width="0.6"/><path d="M5 8.5h9M5 10.5h9M5 12.5h6" stroke="#a9a9a7"/><path d="M5 1.5 Q5 0.5 6.5 0.5 H12.5 Q14 0.5 14 1.5 L14.5 4 H4.5Z" fill="#9c9c94" stroke="#5c5c58" stroke-width="0.8"/></svg>
<svg style="left:552px;top:106px;" width="21" height="23" viewBox="0 0 21 23"><rect x="0.5" y="0.5" width="14" height="17" fill="#f4f4f2" stroke="#8c8c8a"/><path d="M3 4h9M3 6.5h9M3 9h5" stroke="#c8c8c6"/><path d="M15 16.5 L19 20.5" stroke="#6a6a6a" stroke-width="3.4" stroke-linecap="round"/><path d="M15 16.5 L19 20.5" stroke="#e0e0e0" stroke-width="1.6" stroke-linecap="round"/><circle cx="11" cy="12.5" r="6" fill="#f2f2f2" stroke="#707070" stroke-width="1"/><circle cx="11" cy="12.5" r="4.3" fill="#8eb6ea" stroke="#5a8fd6" stroke-width="1"/><circle cx="10" cy="11.3" r="2" fill="#d6e6fa"/></svg>
<div style="left:131px;top:181px;width:530px;height:1px;background:#a59a8f;"></div>
<div style="left:10px;top:153px;width:121px;height:30px;background:linear-gradient(#f6f4f2,#efebe7);border:1px solid #a59a8f;border-bottom:none;border-top:2px solid #e46c14;border-top-left-radius:4px;border-top-right-radius:4px;"></div>
<svg style="left:15px;top:160px;" width="14" height="15" viewBox="0 0 14 15"><rect x="0.5" y="0.5" width="13" height="14" fill="#fafaf8" stroke="#8a8a8a"/><path d="M3 4h8M3 6.5h8M3 9h8M3 11.5h6" stroke="#9a9a9a"/></svg>
<div style="left:34.50px;top:160.00px;font-family:'Liberation Sans';font-size:14px;font-weight:400;font-style:normal;color:#1a1a1a;letter-spacing:0.580px;line-height:1;white-space:pre;">*menu.lst</div>
<svg style="left:112px;top:163px;" width="11" height="11" viewBox="0 0 11 11"><rect x="0" y="0" width="11" height="11" rx="1.5" fill="#f06b12"/><path d="M3 3 L8 8 M8 3 L3 8" stroke="#fff" stroke-width="1.8"/></svg>
<div style="left:11px;top:183px;width:650px;height:369px;background:#efebe7;border:1px solid #8f8479;"></div>
<div style="left:12px;top:184px;width:629px;height:367px;background:#ffffff;border-right:1px solid #a99e92;border-bottom:1px solid #a99e92;"></div>
<div style="left:15px;top:348px;width:621px;height:152px;background:#fdd49a;"></div>
<div style="left:15px;top:500px;width:131px;height:19px;background:#fdd49a;"></div>
<div style="left:13px;top:184px;width:627px;height:365px;overflow:hidden;">
<div style="left:1.50px;top:-5.00px;font-family:'Liberation Mono';font-size:17px;font-weight:400;font-style:normal;color:#333;letter-spacing:-0.202px;line-height:1;white-space:pre;"># the entry number 0 is the default if the command is not</div>
<div style="left:1.50px;top:14.00px;font-family:'Liberation Mono';font-size:17px;font-weight:400;font-style:normal;color:#333;letter-spacing:-0.203px;line-height:1;white-space:pre;">used.</div>
<div style="left:1.50px;top:33.00px;font-family:'Liberation Mono';font-size:17px;font-weight:400;font-style:normal;color:#333;letter-spacing:0.000px;line-height:1;white-space:pre;">#</div>
<div style="left:1.50px;top:52.00px;font-family:'Liberation Mono';font-size:17px;font-weight:400;font-style:normal;color:#333;letter-spacing:-0.202px;line-height:1;white-space:pre;"># You can specify 'saved' instead of a number. In this case,</div>
<div style="left:1.50px;top:71.00px;font-family:'Liberation Mono';font-size:17px;font-weight:400;font-style:normal;color:#333;letter-spacing:-0.202px;line-height:1;white-space:pre;">the default entry</div>
<div style="left:1.50px;top:90.00px;font-family:'Liberation Mono';font-size:17px;font-weight:400;font-style:normal;color:#333;letter-spacing:-0.202px;line-height:1;white-space:pre;"># is the entry saved with the command 'savedefault'.</div>
<div style="left:1.50px;top:109.00px;font-family:'Liberation Mono';font-size:17px;font-weight:400;font-style:normal;color:#333;letter-spacing:-0.202px;line-height:1;white-space:pre;"># WARNING: If you are using dmraid do not change this entry</div>
<div style="left:1.50px;top:128.00px;font-family:'Liberation Mono';font-size:17px;font-weight:400;font-style:normal;color:#333;letter-spacing:-0.202px;line-height:1;white-space:pre;">to 'saved' or your</div>
<div style="left:1.50px;top:147.00px;font-family:'Liberation Mono';font-size:17px;font-weight:400;font-style:normal;color:#333;letter-spacing:-0.202px;line-height:1;white-space:pre;"># array will desync and will not let you boot your system.</div>
<div style="left:1.50px;top:166.00px;font-family:'Liberation Mono';font-size:17px;font-weight:400;font-style:normal;color:#333;letter-spacing:-0.202px;line-height:1;white-space:pre;">default         6</div>
<div style="left:1.50px;top:204.00px;font-family:'Liberation Mono';font-size:17px;font-weight:400;font-style:normal;color:#333;letter-spacing:-0.202px;line-height:1;white-space:pre;">## timeout sec</div>
<div style="left:1.50px;top:223.00px;font-family:'Liberation Mono';font-size:17px;font-weight:400;font-style:normal;color:#333;letter-spacing:-0.202px;line-height:1;white-space:pre;"># Set a timeout, in SEC seconds, before automatically</div>
<div style="left:1.50px;top:242.00px;font-family:'Liberation Mono';font-size:17px;font-weight:400;font-style:normal;color:#333;letter-spacing:-0.202px;line-height:1;white-space:pre;">booting the default entry</div>
<div style="left:1.50px;top:261.00px;font-family:'Liberation Mono';font-size:17px;font-weight:400;font-style:normal;color:#333;letter-spacing:-0.202px;line-height:1;white-space:pre;"># (normally the first entry defined).</div>
<div style="left:1.50px;top:280.00px;font-family:'Liberation Mono';font-size:17px;font-weight:400;font-style:normal;color:#333;letter-spacing:-0.202px;line-height:1;white-space:pre;">timeout                 2</div>
<div style="left:1.50px;top:318.00px;font-family:'Liberation Mono';font-size:17px;font-weight:400;font-style:normal;color:#333;letter-spacing:-0.202px;line-height:1;white-space:pre;">## hiddenmenu</div>
<div style="left:1.50px;top:337.00px;font-family:'Liberation Mono';font-size:17px;font-weight:400;font-style:normal;color:#333;letter-spacing:-0.202px;line-height:1;white-space:pre;"># Hides the menu by default (press ESC to see the menu)</div>
<div style="left:1.50px;top:356.00px;font-family:'Liberation Mono';font-size:17px;font-weight:400;font-style:normal;color:#333;letter-spacing:-0.202px;line-height:1;white-space:pre;">#hiddenmenu</div>
</div>
<div style="left:643px;top:183px;width:15px;height:367px;background:#c9beb3;border:1px solid #8e8378;border-radius:3px;"></div>
<div style="left:643px;top:183px;width:15px;height:15px;border:1px solid #8e8378;border-radius:3px;background:linear-gradient(#fbfaf9,#ece8e4 60%,#e2ddd7);"></div>
<svg style="left:647px;top:188px;" width="7" height="4" viewBox="0 0 7 4"><polygon points="0,4 7,4 3.5,0" fill="#000"/></svg>
<div style="left:643px;top:214px;width:15px;height:35px;border:1px solid #8e8378;background:linear-gradient(90deg,#fbfaf9,#ece8e4 60%,#e2ddd7);"></div>
<svg style="left:647px;top:222px;" width="10" height="19" viewBox="0 0 10 19"><rect x="1" y="1" width="1" height="1" fill="#a99e92"/><rect x="0" y="0" width="1" height="1" fill="#ffffff"/><rect x="1" y="4" width="1" height="1" fill="#a99e92"/><rect x="0" y="3" width="1" height="1" fill="#ffffff"/><rect x="1" y="7" width="1" height="1" fill="#a99e92"/><rect x="0" y="6" width="1" height="1" fill="#ffffff"/><rect x="1" y="10" width="1" height="1" fill="#a99e92"/><rect x="0" y="9" width="1" height="1" fill="#ffffff"/><rect x="1" y="13" width="1" height="1" fill="#a99e92"/><rect x="0" y="12" width="1" height="1" fill="#ffffff"/><rect x="1" y="16" width="1" height="1" fill="#a99e92"/><rect x="0" y="15" width="1" height="1" fill="#ffffff"/><rect x="4" y="1" width="1" height="1" fill="#a99e92"/><rect x="3" y="0" width="1" height="1" fill="#ffffff"/><rect x="4" y="4" width="1" height="1" fill="#a99e92"/><rect x="3" y="3" width="1" height="1" fill="#ffffff"/><rect x="4" y="7" width="1" height="1" fill="#a99e92"/><rect x="3" y="6" width="1" height="1" fill="#ffffff"/><rect x="4" y="10" width="1" height="1" fill="#a99e92"/><rect x="3" y="9" width="1" height="1" fill="#ffffff"/><rect x="4" y="13" width="1" height="1" fill="#a99e92"/><rect x="3" y="12" width="1" height="1" fill="#ffffff"/><rect x="4" y="16" width="1" height="1" fill="#a99e92"/><rect x="3" y="15" width="1" height="1" fill="#ffffff"/><rect x="7" y="1" width="1" height="1" fill="#a99e92"/><rect x="6" y="0" width="1" height="1" fill="#ffffff"/><rect x="7" y="4" width="1" height="1" fill="#a99e92"/><rect x="6" y="3" width="1" height="1" fill="#ffffff"/><rect x="7" y="7" width="1" height="1" fill="#a99e92"/><rect x="6" y="6" width="1" height="1" fill="#ffffff"/><rect x="7" y="10" width="1" height="1" fill="#a99e92"/><rect x="6" y="9" width="1" height="1" fill="#ffffff"/><rect x="7" y="13" width="1" height="1" fill="#a99e92"/><rect x="6" y="12" width="1" height="1" fill="#ffffff"/><rect x="7" y="16" width="1" height="1" fill="#a99e92"/><rect x="6" y="15" width="1" height="1" fill="#ffffff"/></svg>
<div style="left:644px;top:219px;width:13px;height:1px;background:#d9d3cc;"></div>
<div style="left:644px;top:243px;width:13px;height:1px;background:#d9d3cc;"></div>
<div style="left:643px;top:535px;width:15px;height:15px;border:1px solid #8e8378;border-radius:3px;background:linear-gradient(#fbfaf9,#ece8e4 60%,#e2ddd7);"></div>
<svg style="left:647px;top:540px;" width="7" height="4" viewBox="0 0 7 4"><polygon points="0,0 7,0 3.5,4" fill="#000"/></svg>
<div style="left:427.50px;top:555.00px;font-family:'Liberation Sans';font-size:14px;font-weight:400;font-style:normal;color:#4a4a4a;letter-spacing:-0.134px;line-height:1;white-space:pre;">Rg 21, Col 14</div>
<div style="left:589.50px;top:555.00px;font-family:'Liberation Sans';font-size:14px;font-weight:400;font-style:normal;color:#4a4a4a;letter-spacing:-0.672px;line-height:1;white-space:pre;">INS</div>
<svg style="left:647px;top:561px;" width="13" height="13" viewBox="0 0 13 13"><rect x="1" y="10" width="1" height="1" fill="#a99e92"/><rect x="0" y="9" width="1" height="1" fill="#fff"/><rect x="4" y="7" width="1" height="1" fill="#a99e92"/><rect x="3" y="6" width="1" height="1" fill="#fff"/><rect x="4" y="10" width="1" height="1" fill="#a99e92"/><rect x="3" y="9" width="1" height="1" fill="#fff"/><rect x="7" y="4" width="1" height="1" fill="#a99e92"/><rect x="6" y="3" width="1" height="1" fill="#fff"/><rect x="7" y="7" width="1" height="1" fill="#a99e92"/><rect x="6" y="6" width="1" height="1" fill="#fff"/><rect x="7" y="10" width="1" height="1" fill="#a99e92"/><rect x="6" y="9" width="1" height="1" fill="#fff"/><rect x="10" y="1" width="1" height="1" fill="#a99e92"/><rect x="9" y="0" width="1" height="1" fill="#fff"/><rect x="10" y="4" width="1" height="1" fill="#a99e92"/><rect x="9" y="3" width="1" height="1" fill="#fff"/><rect x="10" y="7" width="1" height="1" fill="#a99e92"/><rect x="9" y="6" width="1" height="1" fill="#fff"/><rect x="10" y="10" width="1" height="1" fill="#a99e92"/><rect x="9" y="9" width="1" height="1" fill="#fff"/></svg>
<div style="left:0px;top:0px;width:1152px;height:25px;background:linear-gradient(#f2efeb,#ebe7e2);border-bottom:1px solid #76695c;"></div>
<svg style="left:4px;top:0px;" width="26" height="24" viewBox="0 0 26 24"><defs><linearGradient id="ub" x1="0" y1="0" x2="1" y2="1"><stop offset="0" stop-color="#f6a23c"/><stop offset="0.5" stop-color="#e8571e"/><stop offset="1" stop-color="#d31f1f"/></linearGradient></defs><circle cx="13.2" cy="11.8" r="7" fill="none" stroke="url(#ub)" stroke-width="3.2"/><circle cx="3.9" cy="12" r="3.4" fill="#efebe7"/><circle cx="18" cy="3.6" r="3.4" fill="#efebe7"/><circle cx="18" cy="19.8" r="3.4" fill="#efebe7"/><circle cx="3.9" cy="12" r="2.3" fill="#f47a22"/><circle cx="18" cy="3.6" r="2.3" fill="#dc2b1f"/><circle cx="18" cy="19.8" r="2.3" fill="#f5a02e"/></svg>
<div style="left:31.50px;top:4.00px;font-family:'Liberation Sans';font-size:14px;font-weight:400;font-style:normal;color:#1a1a1a;letter-spacing:0.026px;line-height:1;white-space:pre;">Applicazioni</div>
<div style="left:116.50px;top:4.00px;font-family:'Liberation Sans';font-size:14px;font-weight:400;font-style:normal;color:#1a1a1a;letter-spacing:-0.245px;line-height:1;white-space:pre;">Risorse</div>
<div style="left:173.50px;top:4.00px;font-family:'Liberation Sans';font-size:14px;font-weight:400;font-style:normal;color:#1a1a1a;letter-spacing:0.237px;line-height:1;white-space:pre;">Sistema</div>
<svg style="left:232px;top:0px;" width="23" height="23" viewBox="0 0 23 23"><defs><radialGradient id="gl" cx="48%" cy="22%" r="80%"><stop offset="0" stop-color="#7fdcfb"/><stop offset="0.35" stop-color="#2a9ee0"/><stop offset="0.75" stop-color="#0d3f9c"/><stop offset="1" stop-color="#04154a"/></radialGradient></defs><circle cx="11.3" cy="11.4" r="10.5" fill="url(#gl)"/><path d="M3 7 Q6 4 9 6 Q11 9 8 11 Q6 13 4 11Z M12 7 Q15 6 17 8 Q16 10 13 9Z M9 15 Q13 13 16 15 Q17 19 12 20 Q9 19 9 15Z M17 12 Q20 11 21 14 Q19 17 17 15Z" fill="#0a2e86" opacity="0.6"/></svg>
<svg style="left:256px;top:0px;" width="24" height="23" viewBox="0 0 24 23"><defs><linearGradient id="ml" x1="0" y1="0" x2="0" y2="1"><stop offset="0" stop-color="#fbfbfb"/><stop offset="1" stop-color="#dedede"/></linearGradient></defs><path d="M1.3 8.6 L8.1 1.5 L12.3 1.5 L19.8 8.6 L19.8 20.4 L1.3 20.4Z" fill="url(#ml)" stroke="#8e8e8e" stroke-width="1"/><path d="M1.8 9 L10.5 15 L19.3 9" fill="none" stroke="#b6b6b6" stroke-width="0.8"/><path d="M1.8 20 L8.5 13.5 M19.3 20 L12.5 13.5" stroke="#c8c8c8" stroke-width="0.8"/><circle cx="16.5" cy="15.5" r="5" fill="#ececec" stroke="#8d5aa6" stroke-width="1.3"/><path d="M15.6 12.8 L17.6 15.5 L15.6 18" fill="none" stroke="#444" stroke-width="0.9"/></svg>
<svg style="left:988px;top:3px;" width="7" height="19" viewBox="0 0 7 19"><rect x="1" y="1" width="1" height="1" fill="#a89e93"/><rect x="0" y="0" width="1" height="1" fill="#ffffff"/><rect x="1" y="4" width="1" height="1" fill="#a89e93"/><rect x="0" y="3" width="1" height="1" fill="#ffffff"/><rect x="1" y="7" width="1" height="1" fill="#a89e93"/><rect x="0" y="6" width="1" height="1" fill="#ffffff"/><rect x="1" y="10" width="1" height="1" fill="#a89e93"/><rect x="0" y="9" width="1" height="1" fill="#ffffff"/><rect x="1" y="13" width="1" height="1" fill="#a89e93"/><rect x="0" y="12" width="1" height="1" fill="#ffffff"/><rect x="1" y="16" width="1" height="1" fill="#a89e93"/><rect x="0" y="15" width="1" height="1" fill="#ffffff"/><rect x="4" y="1" width="1" height="1" fill="#a89e93"/><rect x="3" y="0" width="1" height="1" fill="#ffffff"/><rect x="4" y="4" width="1" height="1" fill="#a89e93"/><rect x="3" y="3" width="1" height="1" fill="#ffffff"/><rect x="4" y="7" width="1" height="1" fill="#a89e93"/><rect x="3" y="6" width="1" height="1" fill="#ffffff"/><rect x="4" y="10" width="1" height="1" fill="#a89e93"/><rect x="3" y="9" width="1" height="1" fill="#ffffff"/><rect x="4" y="13" width="1" height="1" fill="#a89e93"/><rect x="3" y="12" width="1" height="1" fill="#ffffff"/><rect x="4" y="16" width="1" height="1" fill="#a89e93"/><rect x="3" y="15" width="1" height="1" fill="#ffffff"/></svg>
<svg style="left:998px;top:3px;" width="19" height="17" viewBox="0 0 19 17"><rect x="1.5" y="6" width="4.5" height="6" rx="1" fill="#dcdcdc" stroke="#555" stroke-width="1.1"/><path d="M2.8 7.5v3M4.6 7.5v3M2.8 9h1.8" stroke="#333" stroke-width="0.7"/><path d="M6 6 L10.3 1.8 L10.3 16.2 L6 12Z" fill="#d8d8d8" stroke="#777" stroke-width="0.9"/><ellipse cx="12.6" cy="9" rx="0.8" ry="2.3" fill="#222"/><ellipse cx="14.6" cy="9" rx="0.9" ry="4.3" fill="#222"/><ellipse cx="16.6" cy="9" rx="0.9" ry="6.3" fill="#222"/></svg>
<div style="left:1019.50px;top:5.00px;font-family:'Liberation Sans';font-size:14px;font-weight:400;font-style:normal;color:#1a1a1a;letter-spacing:0.224px;line-height:1;white-space:pre;">lun  9 apr, 19.21</div>
<svg style="left:1130px;top:1px;" width="21" height="21" viewBox="0 0 21 21"><defs><linearGradient id="pw" x1="0" y1="0" x2="0" y2="1"><stop offset="0" stop-color="#ee3a3a"/><stop offset="1" stop-color="#c20808"/></linearGradient></defs><rect x="0.5" y="0.5" width="20" height="20" rx="2.5" fill="url(#pw)" stroke="#8f0b0b"/><path d="M6.2 6.5 A6 6 0 1 0 14.8 6.5" fill="none" stroke="#f2f2f2" stroke-width="2.6"/><rect x="9.2" y="2.5" width="2.6" height="7" fill="#f2f2f2"/></svg>
<div style="left:0px;top:839px;width:1152px;height:25px;background:linear-gradient(#f3f0ec,#ebe7e2);"></div>
<div style="left:1px;top:840px;width:25px;height:23px;border:1px solid #978d82;border-radius:4px;background:linear-gradient(#fbfaf9,#ebe7e2);"></div>
<svg style="left:4px;top:843px;" width="19" height="17" viewBox="0 0 19 17"><rect x="2" y="2" width="15" height="13" fill="#8f3e14"/><rect x="2" y="2" width="15" height="6" fill="#c2622a"/><path d="M0 0h5v2H2v3H0Z M19 0h-5v2h3v3h2Z M0 17h5v-2H2v-3H0Z M19 17h-5v-2h3v-3h2Z" fill="#222"/><rect x="4" y="4" width="2" height="3" fill="#eee"/><rect x="4" y="8" width="2" height="3" fill="#eee"/></svg>
<svg style="left:31px;top:843px;" width="7" height="19" viewBox="0 0 7 19"><rect x="1" y="1" width="1" height="1" fill="#b7ada2"/><rect x="0" y="0" width="1" height="1" fill="#ffffff"/><rect x="1" y="4" width="1" height="1" fill="#b7ada2"/><rect x="0" y="3" width="1" height="1" fill="#ffffff"/><rect x="1" y="7" width="1" height="1" fill="#b7ada2"/><rect x="0" y="6" width="1" height="1" fill="#ffffff"/><rect x="1" y="10" width="1" height="1" fill="#b7ada2"/><rect x="0" y="9" width="1" height="1" fill="#ffffff"/><rect x="1" y="13" width="1" height="1" fill="#b7ada2"/><rect x="0" y="12" width="1" height="1" fill="#ffffff"/><rect x="1" y="16" width="1" height="1" fill="#b7ada2"/><rect x="0" y="15" width="1" height="1" fill="#ffffff"/><rect x="4" y="1" width="1" height="1" fill="#b7ada2"/><rect x="3" y="0" width="1" height="1" fill="#ffffff"/><rect x="4" y="4" width="1" height="1" fill="#b7ada2"/><rect x="3" y="3" width="1" height="1" fill="#ffffff"/><rect x="4" y="7" width="1" height="1" fill="#b7ada2"/><rect x="3" y="6" width="1" height="1" fill="#ffffff"/><rect x="4" y="10" width="1" height="1" fill="#b7ada2"/><rect x="3" y="9" width="1" height="1" fill="#ffffff"/><rect x="4" y="13" width="1" height="1" fill="#b7ada2"/><rect x="3" y="12" width="1" height="1" fill="#ffffff"/><rect x="4" y="16" width="1" height="1" fill="#b7ada2"/><rect x="3" y="15" width="1" height="1" fill="#ffffff"/></svg>
<div style="left:39px;top:841px;width:242px;height:22px;border:1px solid #978d82;border-radius:4px;background:linear-gradient(#fcfbfa,#f1eeea 50%,#e8e4df);"></div>
<div style="left:283px;top:841px;width:242px;height:22px;border:1px solid #978d82;border-radius:4px;background:linear-gradient(#fcfbfa,#f1eeea 50%,#e8e4df);"></div>
<div style="left:527px;top:841px;width:243px;height:22px;border:1px solid #978d82;border-radius:4px;background:linear-gradient(#e4dfd9,#ebe7e2);"></div>
<div style="left:771px;top:841px;width:242px;height:22px;border:1px solid #978d82;border-radius:4px;background:linear-gradient(#fcfbfa,#f1eeea 50%,#e8e4df);"></div>
<svg style="left:47px;top:845px;" width="14" height="14" viewBox="0 0 14 14"><defs><radialGradient id="hg2" cx="40%" cy="30%" r="70%"><stop offset="0" stop-color="#7ea6df"/><stop offset="1" stop-color="#234f9b"/></radialGradient></defs><circle cx="7" cy="7" r="6.5" fill="url(#hg2)" stroke="#1f3f7a" stroke-width="0.6"/><text x="7" y="10.6" font-family="Liberation Sans" font-weight="700" font-size="9.5" fill="#fff" text-anchor="middle">?</text></svg>
<div style="left:67.50px;top:845.00px;font-family:'Liberation Sans';font-size:14px;font-weight:400;font-style:normal;color:#1a1a1a;letter-spacing:0.010px;line-height:1;white-space:pre;">Partizioni e avvio</div>
<svg style="left:290px;top:845px;" width="16" height="14" viewBox="0 0 16 14"><defs><linearGradient id="tb1" x1="0" y1="0" x2="0" y2="1"><stop offset="0" stop-color="#c9c5bb"/><stop offset="1" stop-color="#5a5648"/></linearGradient><radialGradient id="ts1" cx="45%" cy="40%" r="70%"><stop offset="0" stop-color="#8a948e"/><stop offset="1" stop-color="#1e2420"/></radialGradient></defs><rect x="0.5" y="0.5" width="14.5" height="12.5" rx="2" fill="url(#tb1)" stroke="#55524a" stroke-width="0.9"/><rect x="2.3" y="2.3" width="11" height="7.5" fill="url(#ts1)" stroke="#111" stroke-width="0.6"/><path d="M3.5 8.5 L5 7 M5.5 8.5h1.5" stroke="#e8e8e8" stroke-width="1"/></svg>
<div style="left:312.00px;top:845.00px;font-family:'Liberation Sans';font-size:14px;font-weight:400;font-style:normal;color:#1a1a1a;letter-spacing:0.240px;line-height:1;white-space:pre;">simoilmari@simoilmari-deskto...</div>
<svg style="left:535px;top:845px;" width="15" height="15" viewBox="0 0 15 15"><rect x="0.5" y="2.5" width="12" height="12" fill="#f6f6f4" stroke="#8d939a" stroke-width="0.9"/><path d="M2.5 6h7M2.5 8h7M2.5 10h6M2.5 12h5" stroke="#cfcfcf" stroke-width="0.7"/><circle cx="1.6" cy="2" r="1.05" fill="#e6c400" stroke="#a88a00" stroke-width="0.5"/><circle cx="3.6" cy="2" r="1.05" fill="#e6c400" stroke="#a88a00" stroke-width="0.5"/><circle cx="5.6" cy="2" r="1.05" fill="#e6c400" stroke="#a88a00" stroke-width="0.5"/><circle cx="7.6" cy="2" r="1.05" fill="#e6c400" stroke="#a88a00" stroke-width="0.5"/><circle cx="9.6" cy="2" r="1.05" fill="#e6c400" stroke="#a88a00" stroke-width="0.5"/><path d="M5.6 12.2 L13.3 4.5" stroke="#8a5a12" stroke-width="3.3" stroke-linecap="round"/><path d="M6.2 11.6 L13 4.8" stroke="#f2dca8" stroke-width="1.6"/><circle cx="5.3" cy="12.6" r="1" fill="#111"/></svg>
<div style="left:555.00px;top:845.00px;font-family:'Liberation Sans';font-size:14px;font-weight:400;font-style:normal;color:#1a1a1a;letter-spacing:0.365px;line-height:1;white-space:pre;">*menu.lst (/boot/grub) - gedit</div>
<svg style="left:780px;top:846px;" width="13" height="11" viewBox="0 0 13 11"><rect x="0.5" y="2.5" width="12" height="8" rx="1.5" fill="#555" stroke="#333"/><rect x="4" y="0.5" width="5" height="3" fill="#555"/><circle cx="6.5" cy="6.5" r="2.3" fill="#999" stroke="#222"/></svg>
<div style="left:800.00px;top:845.00px;font-family:'Liberation Sans';font-size:14px;font-weight:400;font-style:normal;color:#1a1a1a;letter-spacing:0.195px;line-height:1;white-space:pre;">Avvio di «Cattura schermata» ...</div>
<div style="left:1016px;top:841px;width:110px;height:22px;background:#aea293;"></div>
<div style="left:1070px;top:841px;width:1px;height:22px;background:#f4f2ef;"></div>
<div style="left:1097px;top:841px;width:1px;height:22px;background:#f4f2ef;"></div>
<div style="left:1016px;top:841px;width:28px;height:22px;background:#efebe7;border-top:1px solid #9a7a5a;"></div>
<div style="left:1017px;top:843px;width:25px;height:18px;background:#efebe7;border:1px solid #111;"></div>
<svg style="left:1026px;top:846px;" width="9" height="9" viewBox="0 0 9 9"><circle cx="4.5" cy="4.5" r="4.3" fill="#2f63b8"/></svg>
<div style="left:1017px;top:843px;width:14px;height:11px;background:#d8702c;border:1px solid #fff;"></div>
<div style="left:1022px;top:855px;width:14px;height:7px;background:#efebe7;border:1.5px solid #111;"></div>
<svg style="left:1129px;top:841px;" width="20" height="22" viewBox="0 0 20 22"><defs><linearGradient id="tr" x1="0" y1="0" x2="0" y2="1"><stop offset="0" stop-color="#f9932e"/><stop offset="1" stop-color="#e8600c"/></linearGradient></defs><path d="M2.5 8 L17.5 8 L16.2 20.5 Q16 21.5 15 21.5 L5 21.5 Q4 21.5 3.8 20.5Z" fill="url(#tr)" stroke="#c85a0a" stroke-width="0.8"/><path d="M1 8 Q1 2 6 1.5 L14 1.5 Q19 2 19 8Z" fill="#e9e9e9" stroke="#9a9a9a" stroke-width="0.8"/><path d="M5 6 L12 2 M9 7 L15 3" stroke="#b0b0b0" stroke-width="1"/><rect x="1" y="7.5" width="18" height="1.5" fill="#f4f4f4" stroke="#9a9a9a" stroke-width="0.6"/><path d="M7.5 16.5 L10 12.5 L12.5 16.5Z" fill="none" stroke="#fff" stroke-width="1.3" stroke-linejoin="round"/></svg>
</body></html>
